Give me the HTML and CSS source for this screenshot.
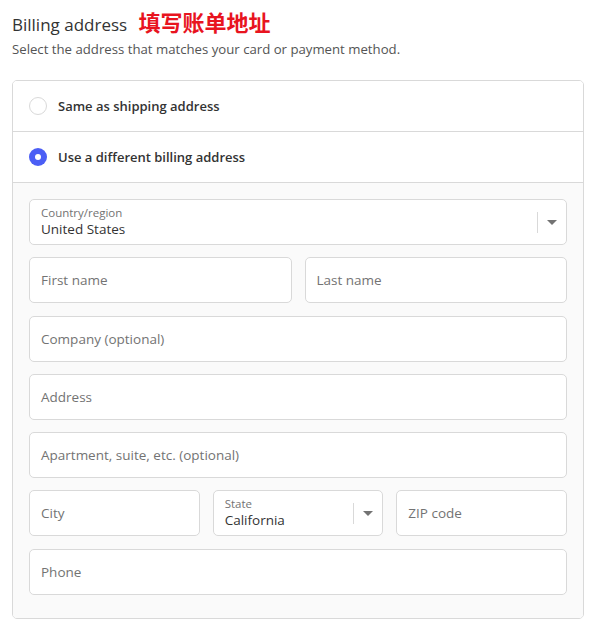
FILE: index.html
```html
<!DOCTYPE html>
<html lang="en">
<head>
    <meta charset="UTF-8">
    <meta name="viewport" content="width=device-width, initial-scale=1.0">
    <title>Billing address</title>
    <link rel="stylesheet" href="styles.css">
</head>
<body>
    <div class="section">
        <h2 class="section-title">Billing address <span class="note">填写账单地址</span></h2>
        <p class="section-text">Select the address that matches your card or payment method.</p>

        <div class="card">
            <label class="choice">
                <span class="radio"></span>
                <span class="choice-label">Same as shipping address</span>
            </label>
            <label class="choice">
                <span class="radio checked"></span>
                <span class="choice-label">Use a different billing address</span>
            </label>

            <div class="form">
                <div class="field select">
                    <span class="field-label">Country/region</span>
                    <span class="field-value">United States</span>
                    <span class="caret"></span>
                </div>

                <div class="row two">
                    <div class="field"><span class="placeholder">First name</span></div>
                    <div class="field"><span class="placeholder">Last name</span></div>
                </div>

                <div class="field"><span class="placeholder">Company (optional)</span></div>
                <div class="field"><span class="placeholder">Address</span></div>
                <div class="field"><span class="placeholder">Apartment, suite, etc. (optional)</span></div>

                <div class="row three">
                    <div class="field"><span class="placeholder">City</span></div>
                    <div class="field select">
                        <span class="field-label">State</span>
                        <span class="field-value">California</span>
                        <span class="caret"></span>
                    </div>
                    <div class="field"><span class="placeholder">ZIP code</span></div>
                </div>

                <div class="field"><span class="placeholder">Phone</span></div>
            </div>
        </div>
    </div>
</body>
</html>
```

FILE: styles.css
```css
* {
    margin: 0;
    padding: 0;
    box-sizing: border-box;
}

body {
    background: #fff;
    font-family: 'Open Sans', 'Noto Sans CJK SC', sans-serif;
    color: #333;
}

.section {
    padding: 10px 15px 0 12px;
}

.section-title {
    height: 24px;
    font-size: 17px;
    font-weight: 400;
    line-height: 24px;
    color: #333;
}

.note {
    margin-left: 7px;
    font-family: 'Noto Sans CJK SC', sans-serif;
    font-size: 22px;
    font-weight: 700;
    line-height: 1;
    color: #e8141f;
}

.section-text {
    margin-top: 6px;
    font-size: 13.2px;
    line-height: 18px;
    color: #545454;
}

.card {
    margin-top: 22px;
    border: 1px solid #d9d9d9;
    border-radius: 5px;
    overflow: hidden;
}

.choice {
    display: flex;
    align-items: center;
    gap: 11px;
    height: 51px;
    padding: 0 16px;
    border-bottom: 1px solid #d9d9d9;
    background: #fff;
}

.radio {
    width: 18px;
    height: 18px;
    border: 1px solid #d9d9d9;
    border-radius: 50%;
    flex-shrink: 0;
    position: relative;
}

.radio.checked {
    border: none;
    background: #4b5ef5;
}

.radio.checked::after {
    content: '';
    position: absolute;
    top: 6px;
    left: 6px;
    width: 6px;
    height: 6px;
    border-radius: 50%;
    background: #fff;
}

.choice-label {
    font-size: 13px;
    font-weight: 600;
    color: #333;
}

.form {
    background: #fafafa;
    padding: 16px 16px 23px 16px;
    display: flex;
    flex-direction: column;
    gap: 12.3px;
}

.row {
    display: grid;
    gap: 13px;
}

.row.two {
    grid-template-columns: 1fr 1fr;
}

.row.three {
    grid-template-columns: 1fr 1fr 1fr;
}

.field {
    position: relative;
    height: 46px;
    background: #fff;
    border: 1px solid #d9d9d9;
    border-radius: 5px;
    padding: 0 11px;
    display: flex;
    flex-direction: column;
    justify-content: center;
}

.placeholder {
    font-size: 13.5px;
    color: #737373;
}

.field-label {
    font-size: 11.5px;
    line-height: 14px;
    color: #737373;
}

.field-value {
    font-size: 13.5px;
    line-height: 18px;
    color: #333;
}

.caret {
    position: absolute;
    top: 12px;
    right: 0;
    width: 29px;
    height: 21px;
    border-left: 1px solid #d9d9d9;
}

.caret::after {
    content: '';
    position: absolute;
    top: 8px;
    left: 9px;
    border-left: 5px solid transparent;
    border-right: 5px solid transparent;
    border-top: 5px solid #737373;
}
```
